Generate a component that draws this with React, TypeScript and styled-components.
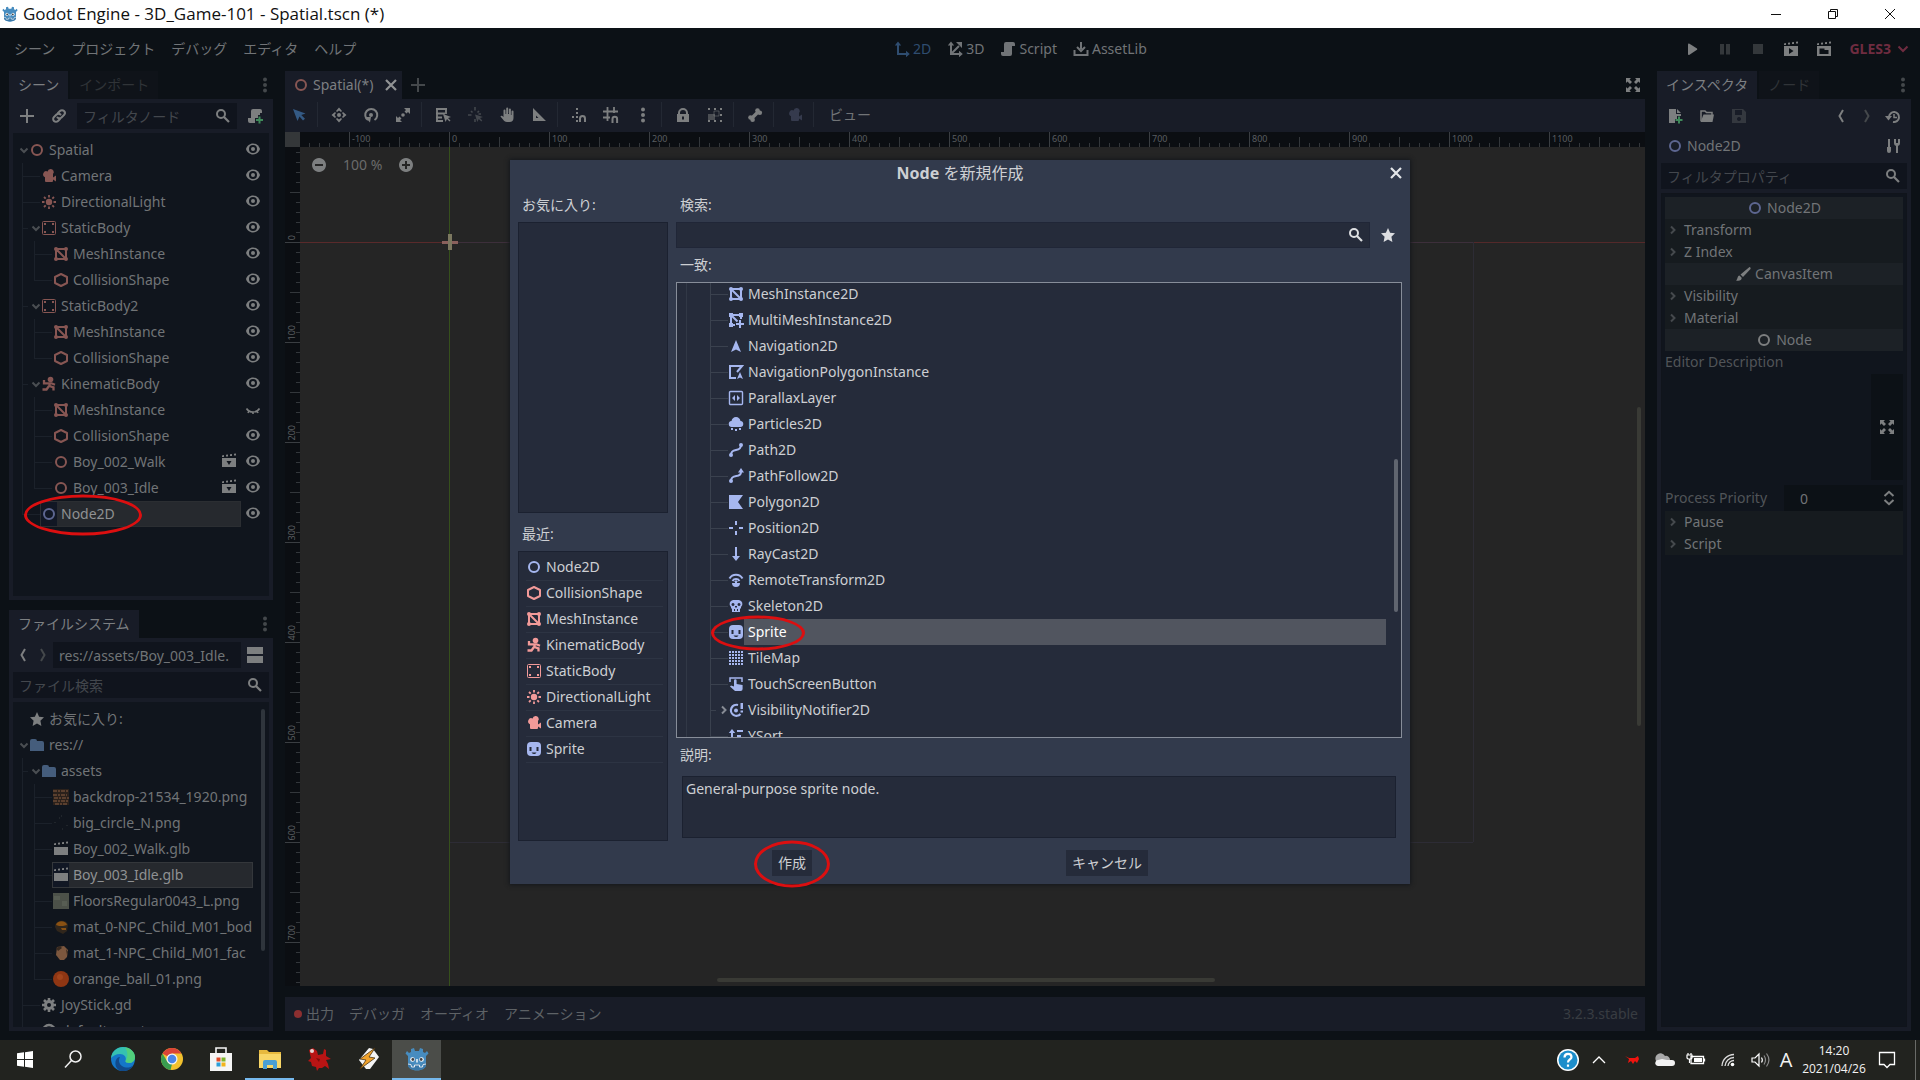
import React from "react";
import styled, { createGlobalStyle, css } from "styled-components";

const GlobalStyle = createGlobalStyle`
  *, *::before, *::after { box-sizing: border-box; }
  html, body { margin: 0; padding: 0; background: #0c1116; }
  body { font: 14px/20px "Noto Sans", "Noto Sans CJK JP", sans-serif; color: #717477; }
  button, input, textarea { font: inherit; color: inherit; margin: 0; padding: 0; border: 0; background: none; border-radius: 0; outline: none; }
  ul { list-style: none; margin: 0; padding: 0; }
`;

/* ---------- icons, drawn on a 16px grid ---------- */

const C = "currentColor";

const clapTop = <path d="M1 2.500l2-.5v2H1zM5 1.700l2-.3v2H5zM9 1.300l2-.3v2H9zM13 .8l2-.3v2h-2z" fill={C} />;

const icons: Record<string, React.ReactNode> = {
  ring: <circle cx="8" cy="8" r="5" fill="none" stroke={C} strokeWidth="2" />,
  camera: <path d="M9.500 1A3 3 0 0 0 6.600 3.500 3 3 0 1 0 4 9.200V13a1 1 0 0 0 1 1h6a1 1 0 0 0 1-1v-1.500l3 2v-6l-3 2V6a3 3 0 0 0-2.500-5z" fill={C} />,
  light: (
    <>
      <circle cx="8" cy="8" r="3.200" fill={C} />
      <path d="M8 1v2.500M8 12.500V15M1 8h2.500M12.500 8H15M3 3l1.700 1.700M11.300 11.300L13 13M3 13l1.700-1.700M11.300 4.700L13 3" stroke={C} strokeWidth="1.800" />
    </>
  ),
  static: (
    <>
      <rect x="1.500" y="1.500" width="13" height="13" rx="1" fill="none" stroke={C} />
      <path d="M3 3h2v2H3zM11 3h2v2h-2zM3 11h2v2H3zM11 11h2v2h-2z" fill={C} />
    </>
  ),
  mesh: (
    <>
      <path d="M3 3h10v10H3zM3 3l10 10" fill="none" stroke={C} strokeWidth="2" />
      <circle cx="3" cy="3" r="2" fill={C} />
      <circle cx="13" cy="3" r="2" fill={C} />
      <circle cx="3" cy="13" r="2" fill={C} />
      <circle cx="13" cy="13" r="2" fill={C} />
    </>
  ),
  shape: <path d="M8 2l6 3v6l-6 3-6-3V5z" fill="none" stroke={C} strokeWidth="2" strokeLinejoin="round" />,
  kinematic: (
    <>
      <circle cx="9.500" cy="3.500" r="2.800" fill={C} />
      <path d="M3 4v3.300h7.500l3.500 1.500M8.500 6.500v3.500l4 1.300v3.200M8 10l-2.500 3.500H1.500" fill="none" stroke={C} strokeWidth="2.300" />
    </>
  ),
  eye: (
    <>
      <path d="M8 2.500C4.800 2.500 2 4.800 1 8c1 3.200 3.800 5.500 7 5.500s6-2.300 7-5.500c-1-3.200-3.800-5.500-7-5.500z" fill={C} />
      <circle cx="8" cy="8" r="4" fill="#10151d" />
      <circle cx="8" cy="8" r="2" fill={C} />
    </>
  ),
  eyeShut: <path d="M1.500 7.500C3 10 5.300 11 8 11s5-1 6.500-3.500M4 10l-1 2M12 10l1 2M8 11v2" fill="none" stroke={C} strokeWidth="1.600" />,
  clap: (
    <>
      {clapTop}
      <path d="M1 6h14v8H1z" fill={C} />
    </>
  ),
  clapDown: (
    <>
      {clapTop}
      <path fillRule="evenodd" d="M1 5h14v9H1zM5.500 8l2.500 4 2.500-4z" fill={C} />
    </>
  ),
  clapPlay: (
    <>
      {clapTop}
      <path fillRule="evenodd" d="M1 5h14v10H1zM6 7v6l4.500-3z" fill={C} />
    </>
  ),
  clapFolder: (
    <>
      {clapTop}
      <path fillRule="evenodd" d="M1 5h14v10H1zM3.500 7.500v5.500h9V9H8.500V7.500z" fill={C} />
    </>
  ),
  plus: <path d="M8 1v14M1 8h14" stroke={C} strokeWidth="2" />,
  link: (
    <g fill="none" stroke={C} strokeWidth="2" strokeLinecap="round">
      <path d="M7 5l2-2a2.800 2.800 0 0 1 4 4l-2.500 2.500a2.800 2.800 0 0 1-4 0" />
      <path d="M9 11l-2 2a2.800 2.800 0 0 1-4-4l2.500-2.500a2.800 2.800 0 0 1 4 0" />
    </g>
  ),
  search: (
    <>
      <circle cx="6" cy="6" r="4" fill="none" stroke={C} strokeWidth="2" />
      <path d="M9 9l5 5" stroke={C} strokeWidth="2.200" />
    </>
  ),
  script: <path d="M6 1a2 2 0 0 0-2 2v8H1v2a2 2 0 0 0 2 2h7a2 2 0 0 0 2-2V5h3V3a2 2 0 0 0-2-2z" fill={C} />,
  scriptAdd: (
    <>
      <path d="M6 1a2 2 0 0 0-2 2v7H1v3a2 2 0 0 0 2 2h5v-5h3V7h2V5h2V3a2 2 0 0 0-2-2z" fill={C} />
      <path d="M12.500 8.500v7M9 12h7" stroke="#3f8a5a" strokeWidth="2" />
    </>
  ),
  dots: (
    <>
      <circle cx="8" cy="2.500" r="2" fill={C} />
      <circle cx="8" cy="8" r="2" fill={C} />
      <circle cx="8" cy="13.500" r="2" fill={C} />
    </>
  ),
  chevDown: <path d="M4.500 6.500L8 10l3.500-3.500" fill="none" stroke={C} strokeWidth="2" />,
  caret: <path d="M3.500 5.500L8 10l4.500-4.500" fill="none" stroke={C} strokeWidth="2" />,
  chevRight: <path d="M6 4.500L9.500 8 6 11.500" fill="none" stroke={C} strokeWidth="2" />,
  prev: <path d="M10 2L6.500 8l3.500 6" fill="none" stroke={C} strokeWidth="2" />,
  next: <path d="M6 2l3.500 6L6 14" fill="none" stroke={C} strokeWidth="2" />,
  split: <path d="M0 0h16v7H0zM0 9h16v7H0z" fill={C} />,
  star: <path d="M8 1l2.100 4.700 4.900.6-3.600 3.500 1 5.200L8 12.500 3.600 15l1-5.200L1 6.300l4.900-.6z" fill={C} />,
  folder: <path d="M1 4a2 2 0 0 1 2-2h3a2 2 0 0 1 2 2h5a2 2 0 0 1 2 2v8H1z" fill={C} />,
  gear: (
    <>
      <path d="M8 1v14M1 8h14M3 3l10 10M13 3L3 13" stroke={C} strokeWidth="2.600" />
      <circle cx="8" cy="8" r="3.500" fill="none" stroke={C} strokeWidth="3" />
      <circle cx="8" cy="8" r="2" fill="#10151d" />
    </>
  ),
  globe: <circle cx="8" cy="8" r="6" fill="none" stroke={C} strokeWidth="2.400" />,
  close: <path d="M3 3l10 10M13 3L3 13" stroke={C} strokeWidth="2.200" />,
  arrow: <path d="M2 2l4.500 12 2-4.500 3.500 4 2-1.700-3.700-3.800 4.200-1.500z" fill={C} />,
  move: (
    <>
      <circle cx="8" cy="8" r="2" fill={C} />
      <path d="M8 .5l3 3.500-1 1-2-1.500L6 5 5 4zM8 15.500l3-3.500-1-1-2 1.500L6 11l-1 1zM.5 8L4 5l1 1-1.500 2L5 10l-1 1zM15.500 8L12 5l-1 1 1.500 2-1.500 2 1 1z" fill={C} />
    </>
  ),
  rotate: (
    <>
      <circle cx="8" cy="8" r="2" fill={C} />
      <path d="M5 13A6 6 0 1 1 11.500 13" fill="none" stroke={C} strokeWidth="2" />
      <path d="M2 10h6l-1 5.500z" fill={C} />
    </>
  ),
  scale: (
    <>
      <circle cx="8" cy="8" r="1.800" fill={C} />
      <path d="M9 1h6v6l-2-2-1.500 1.500-2-2L11 3zM7 15H1V9l2 2 1.500-1.500 2 2L5 13z" fill={C} />
    </>
  ),
  list: (
    <>
      <path d="M1 2h11M1 6.500h9M1 10.500h6M1 14h7M2 1v14M11 1v6" fill="none" stroke={C} strokeWidth="1.800" />
      <path d="M8 7l2.500 8 1.500-3 2.500 2.500 1-1L13 11l3-1z" fill={C} />
    </>
  ),
  pivot: (
    <>
      <path d="M8 0v3.500M8 12v3M1 8h3.500M11.500 7H14M4 4l1.500 1.500M12 4l-1.500 1.500" stroke={C} strokeWidth="1.600" />
      <path d="M8 7.500l2.300 7.500 1.500-3 2.500 2.500 1-1L13 11l3-1z" fill={C} />
    </>
  ),
  hand: <path d="M4.500 3.500a1 1 0 0 1 2 0V7h.7V1.500a1 1 0 0 1 2 0V7h.7V2.500a1 1 0 0 1 2 0V8h.6V4.500a1 1 0 0 1 2 0V11c0 2.500-1.500 4-4 4H8c-2 0-3-1-4-2.500L1.500 9.500c0-1 1.500-1.300 3 .5z" fill={C} />,
  ruler: <path fillRule="evenodd" d="M2 1v13h13zM5 8.500V11h2.500z" fill={C} />,
  smartSnap: (
    <>
      <path d="M9 15v-3.500a2.500 2.500 0 0 1 5 0V15" fill="none" stroke={C} strokeWidth="2" />
      <path d="M5 1h2v2H5zM5 5h2v2H5zM1 9h2v2H1zM5 9h2v2H5zM5 13h2v2H5z" fill={C} />
    </>
  ),
  gridSnap: (
    <>
      <path d="M4.500 0v14M11 0v6M0 4.500h15M0 10.500h7" stroke={C} strokeWidth="1.800" />
      <path d="M9.500 16v-4a2.300 2.300 0 0 1 4.600 0v4" fill="none" stroke={C} strokeWidth="2" />
    </>
  ),
  lock: <path fillRule="evenodd" d="M8 1a5 5 0 0 0-5 5v1H2v8h12V7h-1V6a5 5 0 0 0-5-5zM8 3a3 3 0 0 1 3 3v1H5V6a3 3 0 0 1 3-3zM7 9.500h2v3H7z" fill={C} />,
  group: (
    <>
      <path d="M1 1h2v2H1zM7 1h2v2H7zM13 1h2v2h-2zM13 7h2v2h-2zM1 13h2v2H1zM7 13h2v2H7zM13 13h2v2h-2z" fill={C} />
      <path d="M7 4h5v5H7z" fill="none" stroke={C} opacity=".5" />
      <path d="M1 7h7v6H1z" fill={C} opacity=".5" />
    </>
  ),
  bone: (
    <>
      <path d="M4.500 11.500l7-7" stroke={C} strokeWidth="3.500" />
      <circle cx="10.500" cy="3.500" r="2.300" fill={C} />
      <circle cx="12.800" cy="5.800" r="2.300" fill={C} />
      <circle cx="3.500" cy="10.500" r="2.300" fill={C} />
      <circle cx="5.600" cy="12.700" r="2.300" fill={C} />
    </>
  ),
  two: (
    <>
      <path d="M4 3v10h8" fill="none" stroke={C} strokeWidth="2" />
      <path d="M4 .5L.800 4.500h6.400zM15.800 13L12 9.800v6.400z" fill={C} />
    </>
  ),
  three: (
    <>
      <path d="M4 3v10h8M5 12l7-7" fill="none" stroke={C} strokeWidth="2" />
      <path d="M4 .5L.800 4.500h6.400zM15.800 13L12 9.800v6.400zM9 1h6v6z" fill={C} />
    </>
  ),
  asset: (
    <>
      <path d="M1.500 9v5h13V9" fill="none" stroke={C} strokeWidth="2" />
      <path d="M8 1v7" stroke={C} strokeWidth="2" />
      <path d="M4 6l4 4 4-4" fill="none" stroke={C} strokeWidth="2" />
    </>
  ),
  play: <path d="M4 3.500v9.500a1 1 0 0 0 1.500.8l7.500-5a1 1 0 0 0 0-1.400L5.500 2.700A1 1 0 0 0 4 3.500z" fill={C} />,
  pause: <path d="M3 3h4v10.500H3zM9 3h4v10.500H9z" fill={C} />,
  stop: <path d="M3 3h10v10H3z" fill={C} />,
  expand: <path d="M1 1h5L4.500 2.500 7 5 5 7 2.500 4.500 1 6zM15 1v5l-1.500-1.500L11 7 9 5l2.500-2.500L10 1zM1 15v-5l1.500 1.500L5 9l2 2-2.500 2.500L6 15zM15 15h-5l1.500-1.500L9 11l2-2 2.500 2.500L15 10z" fill={C} />,
  fileAdd: (
    <>
      <path d="M2 1h7v5h5v2h-4v3H8v4H2zM10 1l4 4h-4z" fill={C} />
      <path d="M12 8.500v7M8.500 12h7" stroke="#3f8a5a" strokeWidth="2" />
    </>
  ),
  folderOpen: (
    <>
      <path d="M2 13V3h4l1.500 1.500H13V7" fill="none" stroke={C} strokeWidth="1.500" />
      <path d="M4.500 6.500H15L13.500 14h-12z" fill={C} />
    </>
  ),
  save: <path fillRule="evenodd" d="M1 1h11l3 3v11H1zM4 2v5h7V2zM8 9a2 2 0 1 0 .01 0z" fill={C} />,
  history: (
    <>
      <path d="M4 9a5 5 0 1 1 4 5" fill="none" stroke={C} strokeWidth="2" />
      <path d="M0 8h7l-3.500 4.500z" fill={C} />
      <path d="M9 6v3.500h3" fill="none" stroke={C} strokeWidth="1.500" />
    </>
  ),
  tools: (
    <>
      <path d="M4 1v8M12 7v8" stroke={C} strokeWidth="2" />
      <path d="M2 9h4v4a2 2 0 0 1-4 0zM9 1v4a3 3 0 0 0 6 0V1h-2v4h-2V1z" fill={C} />
    </>
  ),
  brush: <path d="M14.500 1l-9 7.500 2.500 2.500L15.500 3c.5-1-.2-2-1-2zM4.500 9.500C2 10 3 13 1 14.500c3 .8 6 0 5.700-2.700z" fill={C} />,
  spin: <path d="M3.500 6L8 1.800 12.500 6M3.500 10L8 14.200 12.500 10" fill="none" stroke={C} strokeWidth="2" />,
  zoomOut: <path fillRule="evenodd" d="M8 1a7 7 0 1 0 .01 0zM4 7h8v2H4z" fill={C} />,
  zoomIn: <path fillRule="evenodd" d="M8 1a7 7 0 1 0 .01 0zM7 4h2v3h3v2H9v3H7V9H4V7h3z" fill={C} />,
  multimesh: (
    <>
      <path d="M3 12V3h9M4 4l5.500 5.500M13 4v3M4 13h3" fill="none" stroke={C} strokeWidth="2" />
      <path d="M1 1h4v4H1zM11 1h4v4h-4zM1 11h4v4H1z" fill={C} />
      <path d="M12 8v8M8 12h8" stroke={C} strokeWidth="2" />
    </>
  ),
  nav: <path d="M8 2l5 12-5-2.500L3 14z" fill={C} />,
  navPoly: (
    <>
      <path d="M8 14H2V2h12l-5 6" fill="none" stroke={C} strokeWidth="2" />
      <path d="M12 8l3 7-3-1.500L9 15z" fill={C} />
    </>
  ),
  parallax: (
    <>
      <rect x="1.500" y="1.500" width="13" height="13" rx="1" fill="none" stroke={C} strokeWidth="1.400" />
      <path d="M7 5v6L4 8zM9 5v6l3-3z" fill={C} />
    </>
  ),
  particles: <path d="M8 1a5 5 0 0 0-4.500 4A3 3 0 0 0 4 11h8a3 3 0 0 0 .5-6A5 5 0 0 0 8 1zM3 12h2v2H3zM11 12h2v2h-2zM7 13h2v2H7z" fill={C} />,
  path: (
    <>
      <path d="M3 13c0-8 10-2 10-10" fill="none" stroke={C} strokeWidth="2" />
      <circle cx="3" cy="13" r="2" fill={C} />
      <circle cx="13" cy="3" r="2" fill={C} />
    </>
  ),
  pathFollow: (
    <>
      <path d="M3 13c0-8 10-2 10-9" fill="none" stroke={C} strokeWidth="2" />
      <circle cx="3" cy="13" r="2" fill={C} />
      <path d="M13 0l3 4.500h-6z" fill={C} />
    </>
  ),
  polygon: <path d="M1 1h14l-5 7 5 7H1z" fill={C} />,
  position: <path d="M8 1v4M8 11v4M1 8h4M11 8h4" stroke={C} strokeWidth="2" />,
  raycast: <path d="M7 1h2v9h3l-4 5-4-5h3z" fill={C} />,
  remote: (
    <>
      <path d="M1.500 6.500a7.500 7.500 0 0 1 13 0M4.500 9a4.200 4.200 0 0 1 7 0" fill="none" stroke={C} strokeWidth="2" />
      <path d="M8 8l2 2h-1v1h3a4 4 0 0 1-8 0h3v-1H6z" fill={C} />
    </>
  ),
  skeleton: <path fillRule="evenodd" d="M5 2a4 4 0 0 0-2 7v1.500h1V14h8v-3.500h1V9a4 4 0 0 0-2-7zM5 5a1.500 1.500 0 1 0 .01 0zM11 5a1.500 1.500 0 1 0 .01 0zM7 8h2v1.500H7zM6 11h1v2H6zM9 11h1v2H9z" fill={C} />,
  sprite: (
    <>
      <rect x="1" y="1" width="14" height="14" rx="4" fill={C} />
      <path d="M3.500 6h2v4h-2zM10.500 6h2v4h-2z" fill="#252b3a" />
      <path d="M5.500 11.500c1.500 2 3.500 2 5 0z" fill="#252b3a" />
    </>
  ),
  tilemap: <path d="M2 1v14M5 1v14M8 1v14M11 1v14M14 1v14" stroke={C} strokeWidth="2" strokeDasharray="2 1" />,
  touch: (
    <>
      <path d="M2 6V2h12v4" fill="none" stroke={C} strokeWidth="1.500" />
      <path d="M6 4.500a1.300 1.300 0 0 1 2.600 0V8l6 1v4a2 2 0 0 1-2 2H7L2 10.500l1-1 3 1z" fill={C} />
    </>
  ),
  notifier: (
    <>
      <path d="M10 3A5.500 5.500 0 1 0 12.500 12" fill="none" stroke={C} strokeWidth="2.200" />
      <circle cx="8" cy="8.500" r="2" fill={C} />
      <path d="M12.500 1h2.500v6h-2.500zM12.500 8.500H15v2h-2.500z" fill={C} />
    </>
  ),
  ysort: (
    <>
      <path d="M4 1l3.200 4H5v6h2.200L4 15 .8 11H3V5H.8z" fill={C} />
      <path d="M9 3h6M9 8h4M9 13h2" stroke={C} strokeWidth="2" />
    </>
  ),
  texBackdrop: (
    <>
      <path d="M0 0h16v16H0z" fill="#2b211b" />
      <path d="M0 2h16M0 6h14M1 9h15M0 12h16M2 15h12" stroke="#6b4a36" strokeWidth="1.500" strokeDasharray="4 1 2 1" />
    </>
  ),
  texCircle: <path d="M2 7v1M8 1h1M14 10v1M9 14h1M6 3h1" stroke="#30373a" strokeWidth="1" />,
  texFloor: (
    <>
      <path d="M0 0h16v16H0z" fill="#4c5149" />
      <path d="M1 3h6v4H1zM9 8h5v5H9z" fill="#575d53" />
    </>
  ),
  texBody: (
    <>
      <path d="M2 8c0-8 12-8 13-2l-1 6-4 3-6-3z" fill="#30261c" />
      <path d="M3 6c1-5 10-5 11 0l-4 1H6zM8 9h5v2H9z" fill="#8a5113" />
    </>
  ),
  texFace: (
    <>
      <path d="M4 2l7-1 4 4-1 7-3 3H7l-4-5z" fill="#7c573e" />
      <path d="M3 3l4-2 2 2-4 3zM13 4l2 3-1 3z" fill="#37291f" />
    </>
  ),
  texBall: (
    <>
      <circle cx="8" cy="8" r="8" fill="#8f3613" />
      <circle cx="7" cy="6" r="3" fill="#a1441c" />
    </>
  ),
};

const Svg = styled.svg<{ $tone?: string }>`
  display: block;
  flex: none;
  color: ${(p) => p.$tone || "inherit"};
`;

const Icon = ({ name, tone, size = 16 }: { name: string; tone?: string; size?: number }) => (
  <Svg $tone={tone} width={size} height={size} viewBox="0 0 16 16" aria-hidden="true">
    {icons[name]}
  </Svg>
);

const RED = "#875653";
const BLUE = "#5d6690";
const GREY = "#7d7f80";
const FAINT = "#44484b";
const BRIGHT_RED = "#f29a99";
const BRIGHT_BLUE = "#a6b7ef";

/* ---------- window frame ---------- */

const Screen = styled.div`
  display: flex;
  flex-direction: column;
  height: 100vh;
  overflow: hidden;
`;

const TitleBar = styled.header`
  display: flex;
  align-items: center;
  height: 28px;
  flex: none;
  background: #fff;
  color: #111;
  padding: 0 2px;
`;

const WindowTitle = styled.h1`
  flex: 1;
  margin: 0 0 0 5px;
  font: 400 17px/24px "Open Sans", sans-serif;
`;

const FrameButton = styled.button`
  display: grid;
  place-items: center;
  width: 57px;
  height: 26px;
`;

const Editor = styled.div`
  position: relative;
  display: flex;
  flex-direction: column;
  flex: 1;
  min-height: 0;
  padding: 0 9px 9px;
  background: #0c1116;
`;

const MenuBar = styled.nav`
  display: flex;
  align-items: center;
  height: 43px;
  flex: none;
  padding: 0 0 2px 5px;
`;

const MenuGroup = styled.div<{ $gap: number }>`
  display: flex;
  align-items: center;
  gap: ${(p) => p.$gap}px;
`;

const Spacer = styled.span`
  flex: 1;
`;

const ModeButton = styled.button<{ $active?: boolean }>`
  display: flex;
  align-items: center;
  gap: 3px;
  color: ${(p) => (p.$active ? "#2f4d70" : "#717477")};
`;

const Renderer = styled.button`
  display: flex;
  align-items: center;
  gap: 4px;
  color: #6f2c40;
  font-weight: 700;
`;

const Columns = styled.div`
  display: flex;
  flex: 1;
  min-height: 0;
  gap: 12px;
`;

const SideColumn = styled.div<{ $width: number }>`
  display: flex;
  flex-direction: column;
  gap: 10px;
  flex: none;
  width: ${(p) => p.$width}px;
`;

const CenterColumn = styled.main`
  display: flex;
  flex-direction: column;
  flex: 1;
  min-width: 0;
`;

const Dock = styled.section<{ $grow: number }>`
  display: flex;
  flex-direction: column;
  flex: ${(p) => p.$grow} 1 0;
  min-height: 0;
`;

const TabRow = styled.div`
  display: flex;
  gap: 2px;
  height: 28px;
  flex: none;
  align-items: center;
`;

const Tab = styled.button<{ $active?: boolean }>`
  display: flex;
  align-items: center;
  height: 28px;
  padding: 0 9px;
  background: ${(p) => (p.$active ? "#181c27" : "#0f1319")};
  color: ${(p) => (p.$active ? "#7c7f82" : "#303438")};
`;

const SceneTab = styled(Tab)`
  gap: 4px;
  padding: 0 3px 0 8px;
`;

const SceneName = styled.span`
  margin-right: 6px;
`;

const PlainButton = styled.button<{ $tone?: string }>`
  display: grid;
  place-items: center;
  flex: none;
  color: ${(p) => p.$tone || GREY};
`;

const SplitButton = styled(PlainButton)`
  padding: 0 4px;
`;

const DockBody = styled.div`
  display: flex;
  flex-direction: column;
  gap: 4px;
  flex: 1;
  min-height: 0;
  padding: 4px;
  background: #181c27;
`;

const ToolRow = styled.div<{ $gap?: number; $pad?: number }>`
  display: flex;
  align-items: center;
  gap: ${(p) => p.$gap ?? 8}px;
  height: 26px;
  flex: none;
  padding: 0 ${(p) => p.$pad ?? 6}px;
`;

const Field = styled.label`
  display: flex;
  align-items: center;
  flex: 1;
  min-width: 0;
  height: 26px;
  padding: 0 6px;
  background: #10141d;
`;

const FieldInput = styled.input`
  flex: 1;
  min-width: 0;
  width: 0;
  height: 26px;
  &::placeholder { color: #43474d; opacity: 1; }
`;

const SearchBlock = styled.div`
  display: flex;
  flex: none;
`;

/* ---------- trees ---------- */

const GUIDE = "#1b212a";

const TreeBox = styled.div`
  display: flex;
  flex: 1;
  min-height: 0;
  overflow: hidden;
  background: #10151d;
  padding: 4px 4px 0 3px;
`;

const TreeList = styled.ul`
  flex: 1;
  min-width: 0;
`;

const TreeRow = styled.li`
  position: relative;
  display: flex;
  align-items: center;
  height: 26px;
`;

type GuideKind = "none" | "line" | "tee" | "end" | "dash";

const Guide = styled.span<{ $kind: GuideKind; $line: string }>`
  flex: none;
  width: 12px;
  height: 26px;
  background-repeat: no-repeat;
  ${({ $kind, $line }) => {
    const bar = `linear-gradient(${$line}, ${$line})`;
    if ($kind === "line") return css`background-image: ${bar}; background-size: 1px 26px; background-position: 6px 0;`;
    if ($kind === "tee") return css`background-image: ${bar}, ${bar}; background-size: 1px 26px, 6px 1px; background-position: 6px 0, 6px 13px;`;
    if ($kind === "end") return css`background-image: ${bar}, ${bar}; background-size: 1px 13px, 6px 1px; background-position: 6px 0, 6px 13px;`;
    if ($kind === "dash") return css`background-image: ${bar}; background-size: 12px 1px; background-position: 0 13px;`;
    return "";
  }}
`;

const Fold = styled.button`
  display: grid;
  place-items: center;
  flex: none;
  width: 12px;
  height: 26px;
  color: #4a4e52;
`;

const MatchFold = styled(Fold)`
  color: #878b94;
`;

const Item = styled.span<{ $selected?: boolean; $boxed?: boolean }>`
  display: flex;
  align-items: center;
  flex: 1;
  min-width: 0;
  height: 26px;
  gap: 4px;
  padding-left: 1px;
  white-space: nowrap;
  overflow: hidden;
  ${(p) => p.$selected && css`
    color: #8f9193;
    background: #26292e;
    box-shadow: inset 0 0 0 1px ${p.$boxed ? "#34373b" : "#2b2e32"};
  `}
`;

const IconWell = styled.span<{ $dark?: boolean }>`
  display: grid;
  place-items: center;
  flex: none;
  height: 24px;
  background: ${(p) => (p.$dark ? "#111724" : "transparent")};
`;

const RowActions = styled.span`
  display: flex;
  align-items: center;
  gap: 8px;
  flex: none;
  padding: 0 4px 2px;
`;

const Ring = styled.span<{ $w: number; $h: number; $left: number }>`
  position: absolute;
  z-index: 3;
  top: 50%;
  left: ${(p) => p.$left}px;
  width: ${(p) => p.$w}px;
  height: ${(p) => p.$h}px;
  transform: translateY(-50%);
  margin-top: 1px;
  border: 3px solid #dc0f10;
  border-radius: 50%;
  pointer-events: none;
`;

interface Node {
  label: string;
  icon: string;
  tone?: string;
  guides: GuideKind[];
  fold?: boolean;
  clap?: boolean;
  shut?: boolean;
  selected?: boolean;
}

const sceneNodes: Node[] = [
  { label: "Spatial", icon: "ring", tone: RED, guides: [], fold: true },
  { label: "Camera", icon: "camera", tone: RED, guides: ["tee"] },
  { label: "DirectionalLight", icon: "light", tone: RED, guides: ["tee"] },
  { label: "StaticBody", icon: "static", tone: RED, guides: ["tee"], fold: true },
  { label: "MeshInstance", icon: "mesh", tone: RED, guides: ["line", "tee"] },
  { label: "CollisionShape", icon: "shape", tone: RED, guides: ["line", "end"] },
  { label: "StaticBody2", icon: "static", tone: RED, guides: ["tee"], fold: true },
  { label: "MeshInstance", icon: "mesh", tone: RED, guides: ["line", "tee"] },
  { label: "CollisionShape", icon: "shape", tone: RED, guides: ["line", "end"] },
  { label: "KinematicBody", icon: "kinematic", tone: RED, guides: ["tee"], fold: true },
  { label: "MeshInstance", icon: "mesh", tone: RED, guides: ["line", "tee"], shut: true },
  { label: "CollisionShape", icon: "shape", tone: RED, guides: ["line", "tee"] },
  { label: "Boy_002_Walk", icon: "ring", tone: RED, guides: ["line", "tee"], clap: true },
  { label: "Boy_003_Idle", icon: "ring", tone: RED, guides: ["line", "end"], clap: true },
  { label: "Node2D", icon: "ring", tone: BLUE, guides: ["end"], selected: true },
];

const files: Node[] = [
  { label: "お気に入り:", icon: "star", tone: GREY, guides: [] },
  { label: "res://", icon: "folder", tone: "#455d7c", guides: [], fold: true },
  { label: "assets", icon: "folder", tone: "#455d7c", guides: ["tee"], fold: true },
  { label: "backdrop-21534_1920.png", icon: "texBackdrop", guides: ["line", "tee"] },
  { label: "big_circle_N.png", icon: "texCircle", guides: ["line", "tee"] },
  { label: "Boy_002_Walk.glb", icon: "clap", tone: GREY, guides: ["line", "tee"] },
  { label: "Boy_003_Idle.glb", icon: "clap", tone: GREY, guides: ["line", "tee"], selected: true },
  { label: "FloorsRegular0043_L.png", icon: "texFloor", guides: ["line", "tee"] },
  { label: "mat_0-NPC_Child_M01_bod", icon: "texBody", guides: ["line", "tee"] },
  { label: "mat_1-NPC_Child_M01_fac", icon: "texFace", guides: ["line", "tee"] },
  { label: "orange_ball_01.png", icon: "texBall", guides: ["line", "end"] },
  { label: "JoyStick.gd", icon: "gear", tone: GREY, guides: ["tee"] },
  { label: "default_env.tres", icon: "globe", tone: GREY, guides: ["tee"] },
];

const Branch = ({ node }: { node: Node }) => (
  <>
    {node.guides.map((kind, i) => <Guide key={i} $kind={kind} $line={GUIDE} />)}
    {node.fold ? (
      <Fold aria-label={`${node.label} fold`}><Icon name="chevDown" /></Fold>
    ) : (
      <Guide $kind={node.guides.length ? "dash" : "none"} $line={GUIDE} />
    )}
  </>
);

const ScrollTrack = styled.div`
  display: flex;
  flex-direction: column;
  flex: none;
  width: 12px;
  padding: 3px 0 76px 8px;
`;

const ScrollThumb = styled.span`
  flex: 1;
  border-radius: 2px;
  background: #2f353c;
`;

/* ---------- 2D viewport ---------- */

const Toolbar = styled.div`
  display: flex;
  align-items: center;
  gap: 4px;
  height: 33px;
  flex: none;
  padding-bottom: 2px;
  background: #181c27;
`;

const ToolButton = styled.button<{ $tone?: string; $narrow?: boolean }>`
  display: grid;
  place-items: center;
  width: ${(p) => (p.$narrow ? 24 : 28)}px;
  height: 28px;
  color: ${(p) => p.$tone || GREY};
`;

const Divider = styled.span`
  width: 4px;
  height: 25px;
  border-left: 1px solid #232833;
`;

const ViewMenu = styled.button`
  padding: 0 8px;
`;

const ViewGrid = styled.div`
  display: grid;
  grid-template: 15px 1fr / 15px 1fr;
  flex: 1;
  min-height: 0;
  margin-bottom: 11px;
`;

const Corner = styled.div`
  background: #343739;
`;

const TopRuler = styled.div`
  display: flex;
  overflow: hidden;
  padding-left: 49px;
  background-color: #0b0e12;
  background-image: linear-gradient(90deg, #33373b 1px, transparent 1px), linear-gradient(90deg, #33373b 1px, transparent 1px);
  background-size: 10px 4px, 50px 10px;
  background-position: 9px 100%, 49px 100%;
  background-repeat: repeat-x;
`;

const TopMark = styled.span`
  flex: none;
  width: 100px;
  padding-left: 2px;
  border-left: 1px solid #3a3e42;
  font-size: 9px;
  line-height: 14px;
  color: #595d60;
`;

const SideRuler = styled.div`
  overflow: hidden;
  background-color: #0b0e12;
  background-image: linear-gradient(#33373b 1px, transparent 1px), linear-gradient(#33373b 1px, transparent 1px);
  background-size: 4px 10px, 10px 50px;
  background-position: 100% 5px, 100% 45px;
  background-repeat: repeat-y;
`;

const SideMark = styled.span<{ $first?: boolean }>`
  display: flex;
  flex-direction: column;
  justify-content: flex-end;
  height: ${(p) => (p.$first ? 96 : 100)}px;
  padding-bottom: 2px;
  border-bottom: 1px solid #3a3e42;
  font-size: 9px;
  line-height: 14px;
  color: #595d60;
  & > span { writing-mode: vertical-rl; transform: rotate(180deg); }
`;

const Canvas = styled.div`
  position: relative;
  overflow: hidden;
  background: #252525;
`;

const CanvasLine = styled.span<{ $x?: number; $y?: number; $w?: string; $h?: string; $tone: string }>`
  position: absolute;
  left: ${(p) => p.$x ?? 0}px;
  top: ${(p) => p.$y ?? 0}px;
  width: ${(p) => p.$w ?? "1px"};
  height: ${(p) => p.$h ?? "1px"};
  background: ${(p) => p.$tone};
`;

const ZoomBar = styled.div`
  display: flex;
  align-items: center;
  gap: 16px;
  padding: 8px 11px;
  color: #6a6b6b;
`;

const CanvasScroll = styled.span<{ $vertical?: boolean }>`
  position: absolute;
  border-radius: 2px;
  background: #393a35;
  ${(p) => p.$vertical
    ? css`right: 4px; top: 31%; bottom: 31%; width: 4px;`
    : css`bottom: 4px; left: 31%; right: 32%; height: 4px;`}
`;

const BottomPanel = styled.footer`
  display: flex;
  align-items: center;
  gap: 15px;
  height: 34px;
  flex: none;
  padding: 0 7px 0 9px;
  background: #181c27;
  color: #5e6266;
`;

const BottomTab = styled.button`
  display: flex;
  align-items: center;
  gap: 4px;
`;

const RedDot = styled.span`
  width: 8px;
  height: 8px;
  border-radius: 50%;
  background: #8c2f30;
`;

const Version = styled.span`
  color: #383c42;
`;

/* ---------- inspector ---------- */

const ObjectName = styled.div`
  display: flex;
  align-items: center;
  gap: 4px;
  height: 26px;
  padding: 0 6px;
`;

const Properties = styled.div`
  flex: 1;
  min-height: 0;
  padding: 3px;
  border: 1px solid #10141b;
  background: #10151d;
`;

const Category = styled.h2`
  display: flex;
  align-items: center;
  justify-content: center;
  gap: 4px;
  height: 22px;
  margin: 0;
  font: inherit;
  background: #1c2126;
`;

const Section = styled.button`
  display: flex;
  align-items: center;
  gap: 3px;
  width: 100%;
  height: 22px;
  background: #161b1f;
`;

const PropertyLabel = styled.label`
  display: block;
  flex: 1;
  height: 22px;
  line-height: 22px;
  color: #505458;
`;

const DescriptionRow = styled.div`
  display: flex;
  height: 108px;
  padding: 1px 0;
`;

const DescriptionText = styled.textarea`
  flex: 1;
  min-width: 0;
  resize: none;
`;

const DarkButton = styled.button`
  display: grid;
  place-items: center;
  width: 32px;
  background: #0c1116;
  color: ${GREY};
`;

const PriorityRow = styled.div`
  display: flex;
  align-items: center;
  height: 26px;
  margin: 4px 0 0;
`;

const PriorityField = styled.div`
  display: flex;
  align-items: center;
  width: 119px;
  height: 26px;
  padding: 0 6px 0 16px;
  background: #0c1116;
`;

/* ---------- dialog ---------- */

const DialogLayer = styled.div`
  position: absolute;
  z-index: 2;
  inset: 132px 0 156px;
  display: flex;
  justify-content: center;
`;

const Dialog = styled.div`
  display: flex;
  flex-direction: column;
  width: 900px;
  padding: 0 8px 8px;
  background: #323a4c;
  box-shadow: 0 0 4px 1px #14171c;
  color: #cdcfd3;
`;

const DialogHeader = styled.div`
  display: grid;
  grid-template-columns: 1fr auto 1fr;
  align-items: center;
  height: 26px;
  flex: none;
  margin-bottom: 6px;
  & > button { justify-self: end; margin-right: -2px; }
`;

const DialogTitle = styled.h2`
  grid-column: 2;
  margin: 0;
  font-size: 16px;
  font-weight: 400;
  line-height: 24px;
`;

const DialogBody = styled.div`
  display: flex;
  gap: 8px;
  flex: 1;
  min-height: 0;
`;

const ListColumn = styled.div`
  display: flex;
  flex-direction: column;
  gap: 8px;
  width: 150px;
  flex: none;
`;

const MatchColumn = styled.div`
  display: flex;
  flex-direction: column;
  gap: 4px;
  flex: 1;
  min-width: 0;
`;

const Part = styled.section`
  display: flex;
  flex-direction: column;
  gap: 4px;
  flex: 1;
  min-height: 0;
`;

const captionStyle = css`
  flex: none;
  height: 26px;
  margin: 0;
  padding: 0 4px;
  font-size: 14px;
  font-weight: 400;
  line-height: 26px;
`;

const Caption = styled.h3`
  ${captionStyle}
`;

const SearchCaption = styled.label`
  ${captionStyle}
`;

const ListBox = styled.ul`
  flex: 1;
  min-height: 0;
  padding: 3px 4px 3px 7px;
  border: 1px solid #1b2130;
  background: #252b3a;
`;

const RecentItem = styled.li`
  display: flex;
  align-items: center;
  gap: 4px;
  height: 26px;
  border-bottom: 1px solid #2d3443;
`;

const SearchRow = styled.div`
  display: flex;
  align-items: center;
  gap: 10px;
  flex: none;
  padding-right: 6px;
`;

const DialogField = styled.div`
  display: flex;
  align-items: center;
  flex: 1;
  height: 26px;
  padding: 0 5px;
  border: 1px solid #202637;
  background: #252b3a;
`;

const MatchBox = styled.div`
  display: flex;
  flex: 1;
  min-height: 0;
  overflow: hidden;
  border: 1px solid #878d99;
  background: #252b3a;
`;

const MatchList = styled.ul`
  flex: 1;
  margin-top: -2px;
  padding-left: 3px;
`;

const MatchLabel = styled.span<{ $selected?: boolean }>`
  flex: 1;
  height: 26px;
  padding-left: 4px;
  line-height: 26px;
  color: ${(p) => (p.$selected ? "#fff" : "inherit")};
  background: ${(p) => (p.$selected ? "#51555f" : "transparent")};
`;

const MatchScroll = styled.div`
  display: flex;
  flex-direction: column;
  width: 15px;
  padding: 176px 3px 125px 8px;
`;

const MatchThumb = styled.span`
  flex: 1;
  border-radius: 2px;
  background: #60656f;
`;

const Description = styled.p`
  flex: none;
  height: 62px;
  margin: 4px 6px 3px;
  padding: 2px 3px;
  border: 1px solid #1b2130;
  background: #252b3a;
`;

const Actions = styled.div`
  display: flex;
  justify-content: space-evenly;
  flex: none;
  margin-top: 9px;
`;

const ActionButton = styled.button`
  position: relative;
  height: 26px;
  padding: 0 6px;
  background: #252b3a;
`;

const matches: [string, string][] = [
  ["MeshInstance2D", "mesh"],
  ["MultiMeshInstance2D", "multimesh"],
  ["Navigation2D", "nav"],
  ["NavigationPolygonInstance", "navPoly"],
  ["ParallaxLayer", "parallax"],
  ["Particles2D", "particles"],
  ["Path2D", "path"],
  ["PathFollow2D", "pathFollow"],
  ["Polygon2D", "polygon"],
  ["Position2D", "position"],
  ["RayCast2D", "raycast"],
  ["RemoteTransform2D", "remote"],
  ["Skeleton2D", "skeleton"],
  ["Sprite", "sprite"],
  ["TileMap", "tilemap"],
  ["TouchScreenButton", "touch"],
  ["VisibilityNotifier2D", "notifier"],
  ["YSort", "ysort"],
];

const recent: [string, string, string][] = [
  ["Node2D", "ring", BRIGHT_BLUE],
  ["CollisionShape", "shape", BRIGHT_RED],
  ["MeshInstance", "mesh", BRIGHT_RED],
  ["KinematicBody", "kinematic", BRIGHT_RED],
  ["StaticBody", "static", BRIGHT_RED],
  ["DirectionalLight", "light", BRIGHT_RED],
  ["Camera", "camera", BRIGHT_RED],
  ["Sprite", "sprite", BRIGHT_BLUE],
];

const CreateDialog = () => (
  <DialogLayer>
    <Dialog role="dialog" aria-labelledby="dialog-title">
      <DialogHeader>
        <DialogTitle id="dialog-title"><b>Node</b> を新規作成</DialogTitle>
        <PlainButton $tone="#e4e6e9" aria-label="閉じる"><Icon name="close" /></PlainButton>
      </DialogHeader>
      <DialogBody>
        <ListColumn>
          <Part>
            <Caption>お気に入り:</Caption>
            <ListBox />
          </Part>
          <Part>
            <Caption>最近:</Caption>
            <ListBox>
              {recent.map(([label, icon, tone]) => (
                <RecentItem key={label}><Icon name={icon} tone={tone} />{label}</RecentItem>
              ))}
            </ListBox>
          </Part>
        </ListColumn>
        <MatchColumn>
          <SearchCaption htmlFor="node-search">検索:</SearchCaption>
          <SearchRow>
            <DialogField>
              <FieldInput id="node-search" type="text" />
              <Icon name="search" tone="#dcdee1" />
            </DialogField>
            <PlainButton $tone="#dcdee1" aria-label="お気に入りに追加"><Icon name="star" /></PlainButton>
          </SearchRow>
          <Caption>一致:</Caption>
          <MatchBox>
            <MatchList>
              {matches.map(([label, icon]) => (
                <TreeRow key={label}>
                  <Guide $kind="line" $line="#313846" />
                  <Guide $kind="none" $line="#313846" />
                  <Guide $kind={label === "YSort" ? "end" : "tee"} $line="#3a414e" />
                  {label === "VisibilityNotifier2D"
                    ? <MatchFold aria-label="VisibilityNotifier2D fold"><Icon name="chevRight" /></MatchFold>
                    : <Guide $kind="dash" $line="#3a414e" />}
                  <Icon name={icon} tone={BRIGHT_BLUE} />
                  <MatchLabel $selected={label === "Sprite"}>{label}</MatchLabel>
                  {label === "Sprite" && <Ring $w={94} $h={35} $left={31} />}
                </TreeRow>
              ))}
            </MatchList>
            <MatchScroll><MatchThumb /></MatchScroll>
          </MatchBox>
          <Caption>説明:</Caption>
          <Description>General-purpose sprite node.</Description>
        </MatchColumn>
      </DialogBody>
      <Actions>
        <ActionButton>作成<Ring $w={76} $h={47} $left={-18} /></ActionButton>
        <ActionButton>キャンセル</ActionButton>
      </Actions>
    </Dialog>
  </DialogLayer>
);

/* ---------- taskbar ---------- */

const Taskbar = styled.footer`
  display: flex;
  align-items: stretch;
  height: 40px;
  flex: none;
  background: #22231f;
  color: #f3f3f3;
`;

const TaskButton = styled.button<{ $open?: boolean; $active?: boolean }>`
  display: grid;
  place-items: center;
  width: 49px;
  border-bottom: 2px solid ${(p) => (p.$open || p.$active ? "#76b9ed" : "transparent")};
  background: ${(p) => (p.$active ? "#4b4d49" : "transparent")};
`;

const Tray = styled.div`
  display: flex;
  align-items: center;
  margin-left: auto;
`;

const TrayButton = styled.button<{ $w: number }>`
  display: grid;
  place-items: center;
  width: ${(p) => p.$w}px;
  height: 40px;
`;

const Ime = styled.span`
  font: 20px/24px "Open Sans", sans-serif;
`;

const Clock = styled.time`
  width: 74px;
  text-align: center;
  font: 12px/18px "Open Sans", sans-serif;
`;

const ShowDesktop = styled.button`
  width: 5px;
  height: 40px;
  margin-left: 12px;
  border-left: 1px solid #6a6b68;
`;

const Godot = ({ size }: { size: number }) => (
  <Svg width={size} height={size} viewBox="0 0 24 24" aria-hidden="true">
    <path d="M9 1l1 3h4l1-3 3 1v3l2 1 2-2 1.500 2.500L21 9v9c0 3-4 5.500-9 5.500S3 21 3 18V9L.500 6.500 2 4l2 2 2-1V2z" fill="#478cbf" />
    <path d="M3 16l4 .5.500 2.500h2v-2h5v2h2l.5-2.500 4-.5v2c0 3-4 5-9 5s-9-2-9-5z" fill="#3a78a8" />
    <circle cx="7.500" cy="12.500" r="2.300" fill="#fff" />
    <circle cx="16.500" cy="12.500" r="2.300" fill="#fff" />
    <circle cx="7.800" cy="12.500" r="1.400" fill="#414042" />
    <circle cx="16.200" cy="12.500" r="1.400" fill="#414042" />
    <path d="M11.300 12h1.400v3.500h-1.400z" fill="#fff" />
    <path d="M3 17l3 .5.500 2.500h3v-2h5v2h3l.5-2.500 3-.5" fill="none" stroke="#dfeaf2" />
  </Svg>
);

const taskIcons: Record<string, React.ReactNode> = {
  start: <path d="M4 6.300l7-1V12H4zM12 5.200L20 4v8h-8zM4 13h7v6.700l-7-1zM12 13h8v8l-8-1.200z" fill="#fff" />,
  find: (
    <g fill="none" stroke="#f0f0f0" strokeWidth="1.500">
      <circle cx="13.500" cy="9.500" r="5.500" />
      <path d="M9.500 13.500L3 20.500" />
    </g>
  ),
  edge: (
    <>
      <circle cx="12" cy="12" r="12" fill="#1577c8" />
      <path d="M0 11C1 4 6 0 12 0c7 0 12 5 12 10 0 4-3 6-6 6-2 0-4-.7-3.500-2C16 10 13 7 9 7c-4 0-7 2-9 4z" fill="#35c1b1" />
      <path d="M14 .2C20 1 24 5.500 24 10c0 4-3 6-6 6-2 0-4-.7-3.500-2 3-4 2-10-.5-13.800z" fill="#5bd36a" opacity=".75" />
      <path d="M9 10c-3 5 1 10 6 10.500 3 .3 5-.5 7.500-2A12 12 0 0 1 12 24C6 24 3 18 5 13c1-2 2-3 4-3z" fill="#114a8b" />
    </>
  ),
  chrome: (
    <>
      <circle cx="12" cy="12" r="11" fill="#f2c12e" />
      <path d="M12 12L2.500 6.500A11 11 0 0 1 21.500 6.500H12z" fill="#db4437" />
      <path d="M2.500 6.500L7.500 15l4.500 2-1.500 6A11 11 0 0 1 2.500 6.500z" fill="#3a9d50" />
      <circle cx="12" cy="12" r="5.500" fill="#f4f4f4" />
      <circle cx="12" cy="12" r="4.300" fill="#4a86e8" />
    </>
  ),
  store: (
    <>
      <path d="M1 6h22v18H1z" fill="#f5f5f5" />
      <path d="M7 8V1h10v7" fill="none" stroke="#f5f5f5" strokeWidth="1.600" />
      <path d="M7.500 10.500h4v4h-4z" fill="#e04b2a" />
      <path d="M12.500 10.500h4v4h-4z" fill="#7fb52c" />
      <path d="M7.500 15.500h4v4h-4z" fill="#2b9fd9" />
      <path d="M12.500 15.500h4v4h-4z" fill="#f2b41c" />
    </>
  ),
  explorer: (
    <>
      <path d="M1 3h8l2 2h12v16H1z" fill="#e7b93e" />
      <path d="M1 7h22v14H1z" fill="#f8d667" />
      <path d="M5 22v-7a2 2 0 0 1 2-2h10a2 2 0 0 1 2 2v7h-4v-4H9v4z" fill="#4a9fd4" />
    </>
  ),
  imp: (
    <>
      <path d="M2 3l4-2 4 3 1 4 5-1 1-5 2 1v6l5 3-5 1 2 4 1 5-4-3-3 2-3 0-2 3-1-4-4-1-1-4-3-1 3-3-1-4z" fill="#b81414" />
      <circle cx="5" cy="4" r="2" fill="#e7d6d6" />
      <path d="M9 11l4 1-1 3z" fill="#7c0b0b" />
    </>
  ),
  bolt: (
    <>
      <path d="M13 1l4 1 6 8-9 12-4 0-7-9z" fill="#f4f4f4" />
      <path d="M19 1L4 12l6 1-6 9 15-11-6-1z" fill="#f0a22b" stroke="#4a3413" strokeWidth=".8" />
    </>
  ),
  help: (
    <>
      <circle cx="12" cy="12" r="11" fill="#fff" />
      <circle cx="12" cy="12" r="9.500" fill="#1d8ecb" />
      <path d="M8.500 9.500c0-5 7-4.500 7-.5 0 2.500-3.500 2.500-3.500 5.500M12 16.500v2.300" fill="none" stroke="#fff" strokeWidth="2.200" />
    </>
  ),
  up: <path d="M6 15l6-6 6 6" fill="none" stroke="#fff" strokeWidth="1.300" />,
  fox: <path d="M5 8l4 2h6l3-2 1 3-2 4-2-2-2 3-2-3-3 2 1-4z" fill="#f0140f" />,
  cloud: (
    <>
      <path d="M4 13a5 5 0 0 1 9-5 4 4 0 0 1 5 4z" fill="#a9a9a9" />
      <path d="M4 17a3 3 0 0 1 2-5l4-1 5 1 5 0a3 3 0 0 1 0 6H7a3 3 0 0 1-3-1z" fill="#f2f2f2" />
    </>
  ),
  battery: (
    <>
      <path d="M8 8.500h12.500v7H8zM21.500 10.500v3" fill="none" stroke="#fff" strokeWidth="1.300" />
      <path d="M11 10h8v4h-8z" fill="#fff" />
      <path d="M5 5v2M8 5v2M4 7h5v3l-1 1H5l-1-1zM6.500 11v4" fill="none" stroke="#fff" strokeWidth="1.200" />
    </>
  ),
  wifi: (
    <>
      <path d="M6 18A12 12 0 0 1 18 6.500M9 18a9 9 0 0 1 9-8.500M12 18a6 6 0 0 1 6-5.500" fill="none" stroke="#ddd" strokeWidth="1.300" />
      <circle cx="16.500" cy="16.500" r="1.800" fill="#fff" />
    </>
  ),
  volume: (
    <>
      <path d="M4 10h3l4-4v12l-4-4H4z" fill="none" stroke="#fff" strokeWidth="1.200" />
      <path d="M13.500 9.500c1 1.500 1 3.500 0 5" fill="none" stroke="#fff" strokeWidth="1.200" />
      <path d="M16 7.500c2 3 2 6 0 9M18.500 5.500c3 4 3 9 0 13" fill="none" stroke="#8b8b8b" strokeWidth="1.200" />
    </>
  ),
  note: <path d="M4.500 4.500h15v12H15l-3 3-3-3H4.500z" fill="none" stroke="#fff" strokeWidth="1.300" />,
  minimize: <path d="M7 12.500h10" stroke="#111" />,
  restore: <path d="M7.500 9.500h7v7h-7zM9.500 9V7.500h7v7H15" fill="none" stroke="#111" />,
  quit: <path d="M7 7l10 10M17 7L7 17" stroke="#111" />,
};

const TaskIcon = ({ name, size = 24 }: { name: string; size?: number }) => (
  <Svg width={size} height={size} viewBox="0 0 24 24" aria-hidden="true">{taskIcons[name]}</Svg>
);

const tools: (string | [string, string])[] = [
  ["arrow", "#345a85"], "|", "move", "rotate", "scale", "|", "list", ["pivot", "#43474d"], "hand", "ruler", "|",
  "smartSnap", "gridSnap", "dots", "|", "lock", "group", "|", "bone", "|", ["camera", "#353a4d"], "|",
];

const topMarks = [-100, 0, 100, 200, 300, 400, 500, 600, 700, 800, 900, 1000, 1100];
const sideMarks = [0, 100, 200, 300, 400, 500, 600, 700];

export default function App() {
  return (
    <Screen>
      <GlobalStyle />
      <TitleBar>
        <Godot size={16} />
        <WindowTitle>Godot Engine - 3D_Game-101 - Spatial.tscn (*)</WindowTitle>
        <FrameButton aria-label="最小化"><TaskIcon name="minimize" /></FrameButton>
        <FrameButton aria-label="元に戻す"><TaskIcon name="restore" /></FrameButton>
        <FrameButton aria-label="閉じる"><TaskIcon name="quit" /></FrameButton>
      </TitleBar>

      <Editor>
        <MenuBar>
          <MenuGroup $gap={16}>
            {["シーン", "プロジェクト", "デバッグ", "エディタ", "ヘルプ"].map((m) => <button key={m}>{m}</button>)}
          </MenuGroup>
          <Spacer />
          <MenuGroup $gap={16}>
            <ModeButton $active><Icon name="two" />2D</ModeButton>
            <ModeButton><Icon name="three" />3D</ModeButton>
            <ModeButton><Icon name="script" />Script</ModeButton>
            <ModeButton><Icon name="asset" />AssetLib</ModeButton>
          </MenuGroup>
          <Spacer />
          <MenuGroup $gap={17}>
            <PlainButton aria-label="再生"><Icon name="play" /></PlainButton>
            <PlainButton $tone="#34383b" aria-label="一時停止"><Icon name="pause" /></PlainButton>
            <PlainButton $tone="#34383b" aria-label="停止"><Icon name="stop" /></PlainButton>
            <PlainButton aria-label="シーンを再生"><Icon name="clapPlay" /></PlainButton>
            <PlainButton aria-label="カスタムシーンを再生"><Icon name="clapFolder" /></PlainButton>
            <Renderer>GLES3<Icon name="caret" /></Renderer>
          </MenuGroup>
        </MenuBar>

        <Columns>
          <SideColumn $width={264}>
            <Dock $grow={529}>
              <TabRow>
                <Tab $active>シーン</Tab>
                <Tab>インポート</Tab>
                <Spacer />
                <PlainButton $tone={FAINT} aria-label="ドックメニュー"><Icon name="dots" /></PlainButton>
              </TabRow>
              <DockBody>
                <ToolRow $gap={10}>
                  <MenuGroup $gap={16}>
                    <PlainButton aria-label="ノードを追加"><Icon name="plus" /></PlainButton>
                    <PlainButton aria-label="シーンをインスタンス化"><Icon name="link" /></PlainButton>
                  </MenuGroup>
                  <Field>
                    <FieldInput type="text" placeholder="フィルタノード" aria-label="フィルタノード" />
                    <Icon name="search" tone={GREY} />
                  </Field>
                  <PlainButton aria-label="スクリプトをアタッチ"><Icon name="scriptAdd" /></PlainButton>
                </ToolRow>
                <TreeBox>
                  <TreeList>
                    {sceneNodes.map((node, i) => (
                      <TreeRow key={i}>
                        <Branch node={node} />
                        <Item $selected={node.selected}>
                          <IconWell $dark={node.selected}><Icon name={node.icon} tone={node.tone} /></IconWell>
                          {node.label}
                        </Item>
                        <RowActions>
                          {node.clap && <PlainButton aria-label="シーンを開く"><Icon name="clapDown" /></PlainButton>}
                          <PlainButton aria-label="表示切替"><Icon name={node.shut ? "eyeShut" : "eye"} /></PlainButton>
                        </RowActions>
                        {node.selected && <Ring $w={118} $h={41} $left={8} />}
                      </TreeRow>
                    ))}
                  </TreeList>
                </TreeBox>
              </DockBody>
            </Dock>

            <Dock $grow={421}>
              <TabRow>
                <Tab $active>ファイルシステム</Tab>
                <Spacer />
                <PlainButton $tone={FAINT} aria-label="ドックメニュー"><Icon name="dots" /></PlainButton>
              </TabRow>
              <DockBody>
                <ToolRow $gap={2} $pad={2}>
                  <MenuGroup $gap={4}>
                    <PlainButton aria-label="戻る"><Icon name="prev" /></PlainButton>
                    <PlainButton $tone={FAINT} aria-label="進む"><Icon name="next" /></PlainButton>
                  </MenuGroup>
                  <Field>
                    <FieldInput type="text" defaultValue="res://assets/Boy_003_Idle." aria-label="パス" />
                  </Field>
                  <SplitButton aria-label="分割モード"><Icon name="split" /></SplitButton>
                </ToolRow>
                <SearchBlock>
                  <Field>
                    <FieldInput type="text" placeholder="ファイル検索" aria-label="ファイル検索" />
                    <Icon name="search" tone={GREY} />
                  </Field>
                </SearchBlock>
                <TreeBox>
                  <TreeList>
                    {files.map((node) => (
                      <TreeRow key={node.label}>
                        <Branch node={node} />
                        <Item $selected={node.selected} $boxed>
                          <IconWell $dark={node.selected}><Icon name={node.icon} tone={node.tone} /></IconWell>
                          {node.label}
                        </Item>
                      </TreeRow>
                    ))}
                  </TreeList>
                  <ScrollTrack><ScrollThumb /></ScrollTrack>
                </TreeBox>
              </DockBody>
            </Dock>
          </SideColumn>

          <CenterColumn>
            <TabRow>
              <SceneTab $active>
                <Icon name="ring" tone={RED} />
                <SceneName>Spatial(*)</SceneName>
                <Icon name="close" tone="#919394" />
              </SceneTab>
              <ToolButton $tone={FAINT} aria-label="新しいシーン"><Icon name="plus" /></ToolButton>
              <Spacer />
              <ToolButton $narrow aria-label="集中モード"><Icon name="expand" /></ToolButton>
            </TabRow>
            <Toolbar>
              {tools.map((t, i) => {
                if (t === "|") return <Divider key={i} />;
                const [name, tone] = typeof t === "string" ? [t, undefined] : t;
                return <ToolButton key={i} $tone={tone} aria-label={name}><Icon name={name} /></ToolButton>;
              })}
              <ViewMenu>ビュー</ViewMenu>
            </Toolbar>
            <ViewGrid>
              <Corner />
              <TopRuler>
                {topMarks.map((n) => <TopMark key={n}>{n}</TopMark>)}
              </TopRuler>
              <SideRuler>
                {sideMarks.map((n) => <SideMark key={n} $first={n === 0}><span>{n}</span></SideMark>)}
              </SideRuler>
              <Canvas>
                <CanvasLine $y={95} $w="100%" $tone="#54292a" />
                <CanvasLine $x={149} $y={95} $w="1024px" $tone="#3d2f3b" />
                <CanvasLine $x={0} $y={95} $w="149px" $tone="#5a2a2b" />
                <CanvasLine $x={149} $y={695} $w="1024px" $tone="#2d2c35" />
                <CanvasLine $x={1173} $y={95} $h="600px" $tone="#2d2c35" />
                <CanvasLine $x={149} $h="100%" $tone="#36501c" />
                <CanvasLine $x={142} $y={94} $w="16px" $h="3px" $tone="#8a605c" />
                <CanvasLine $x={148} $y={87} $w="4px" $h="16px" $tone="#7c7860" />
                <ZoomBar>
                  <PlainButton aria-label="縮小"><Icon name="zoomOut" /></PlainButton>
                  <span>100 %</span>
                  <PlainButton aria-label="拡大"><Icon name="zoomIn" /></PlainButton>
                </ZoomBar>
                <CanvasScroll $vertical />
                <CanvasScroll />
              </Canvas>
            </ViewGrid>
            <BottomPanel>
              <BottomTab><RedDot />出力</BottomTab>
              <BottomTab>デバッガ</BottomTab>
              <BottomTab>オーディオ</BottomTab>
              <BottomTab>アニメーション</BottomTab>
              <Spacer />
              <Version>3.2.3.stable</Version>
            </BottomPanel>
          </CenterColumn>

          <SideColumn $width={254}>
            <Dock $grow={1}>
              <TabRow>
                <Tab $active>インスペクタ</Tab>
                <Tab>ノード</Tab>
                <Spacer />
                <PlainButton $tone={FAINT} aria-label="ドックメニュー"><Icon name="dots" /></PlainButton>
              </TabRow>
              <DockBody>
                <ToolRow $gap={16}>
                  <PlainButton aria-label="新規リソース"><Icon name="fileAdd" /></PlainButton>
                  <PlainButton aria-label="開く"><Icon name="folderOpen" /></PlainButton>
                  <PlainButton $tone="#34383f" aria-label="保存"><Icon name="save" /></PlainButton>
                  <Spacer />
                  <MenuGroup $gap={10}>
                    <PlainButton aria-label="前へ"><Icon name="prev" /></PlainButton>
                    <PlainButton $tone={FAINT} aria-label="次へ"><Icon name="next" /></PlainButton>
                    <PlainButton aria-label="履歴"><Icon name="history" /></PlainButton>
                  </MenuGroup>
                </ToolRow>
                <ObjectName>
                  <Icon name="ring" tone={BLUE} />Node2D
                  <Spacer />
                  <PlainButton aria-label="オブジェクト設定"><Icon name="tools" /></PlainButton>
                </ObjectName>
                <SearchBlock>
                  <Field>
                    <FieldInput type="text" placeholder="フィルタプロパティ" aria-label="フィルタプロパティ" />
                    <Icon name="search" tone={GREY} />
                  </Field>
                </SearchBlock>
                <Properties>
                  <Category><Icon name="ring" tone={BLUE} />Node2D</Category>
                  <Section><Icon name="chevRight" tone="#45494d" />Transform</Section>
                  <Section><Icon name="chevRight" tone="#45494d" />Z Index</Section>
                  <Category><Icon name="brush" tone={GREY} />CanvasItem</Category>
                  <Section><Icon name="chevRight" tone="#45494d" />Visibility</Section>
                  <Section><Icon name="chevRight" tone="#45494d" />Material</Section>
                  <Category><Icon name="ring" tone={GREY} />Node</Category>
                  <PropertyLabel htmlFor="editor-description">Editor Description</PropertyLabel>
                  <DescriptionRow>
                    <DescriptionText id="editor-description" />
                    <DarkButton aria-label="拡大編集"><Icon name="expand" /></DarkButton>
                  </DescriptionRow>
                  <PriorityRow>
                    <PropertyLabel htmlFor="priority">Process Priority</PropertyLabel>
                    <PriorityField>
                      <FieldInput id="priority" type="text" inputMode="numeric" defaultValue="0" />
                      <Icon name="spin" tone={GREY} />
                    </PriorityField>
                  </PriorityRow>
                  <Section><Icon name="chevRight" tone="#45494d" />Pause</Section>
                  <Section><Icon name="chevRight" tone="#45494d" />Script</Section>
                </Properties>
              </DockBody>
            </Dock>
          </SideColumn>
        </Columns>
        <CreateDialog />
      </Editor>

      <Taskbar>
        <TaskButton aria-label="スタート"><TaskIcon name="start" /></TaskButton>
        <TaskButton aria-label="検索"><TaskIcon name="find" /></TaskButton>
        <TaskButton aria-label="Edge"><TaskIcon name="edge" /></TaskButton>
        <TaskButton aria-label="Chrome"><TaskIcon name="chrome" /></TaskButton>
        <TaskButton aria-label="ストア"><TaskIcon name="store" /></TaskButton>
        <TaskButton $open aria-label="エクスプローラー"><TaskIcon name="explorer" /></TaskButton>
        <TaskButton aria-label="ペイント"><TaskIcon name="imp" /></TaskButton>
        <TaskButton aria-label="プレーヤー"><TaskIcon name="bolt" /></TaskButton>
        <TaskButton $active aria-label="Godot"><Godot size={24} /></TaskButton>
        <Tray>
          <TrayButton $w={30} aria-label="ヘルプ"><TaskIcon name="help" /></TrayButton>
          <TrayButton $w={32} aria-label="隠れているアイコン"><TaskIcon name="up" /></TrayButton>
          <TrayButton $w={34} aria-label="通知アイコン"><TaskIcon name="fox" /></TrayButton>
          <TrayButton $w={30} aria-label="OneDrive"><TaskIcon name="cloud" /></TrayButton>
          <TrayButton $w={32} aria-label="電源"><TaskIcon name="battery" /></TrayButton>
          <TrayButton $w={34} aria-label="ネットワーク"><TaskIcon name="wifi" /></TrayButton>
          <TrayButton $w={30} aria-label="音量"><TaskIcon name="volume" /></TrayButton>
          <TrayButton $w={22} aria-label="入力モード"><Ime>A</Ime></TrayButton>
          <Clock>14:20<br />2021/04/26</Clock>
          <TrayButton $w={32} aria-label="通知"><TaskIcon name="note" /></TrayButton>
          <ShowDesktop aria-label="デスクトップの表示" />
        </Tray>
      </Taskbar>
    </Screen>
  );
}
